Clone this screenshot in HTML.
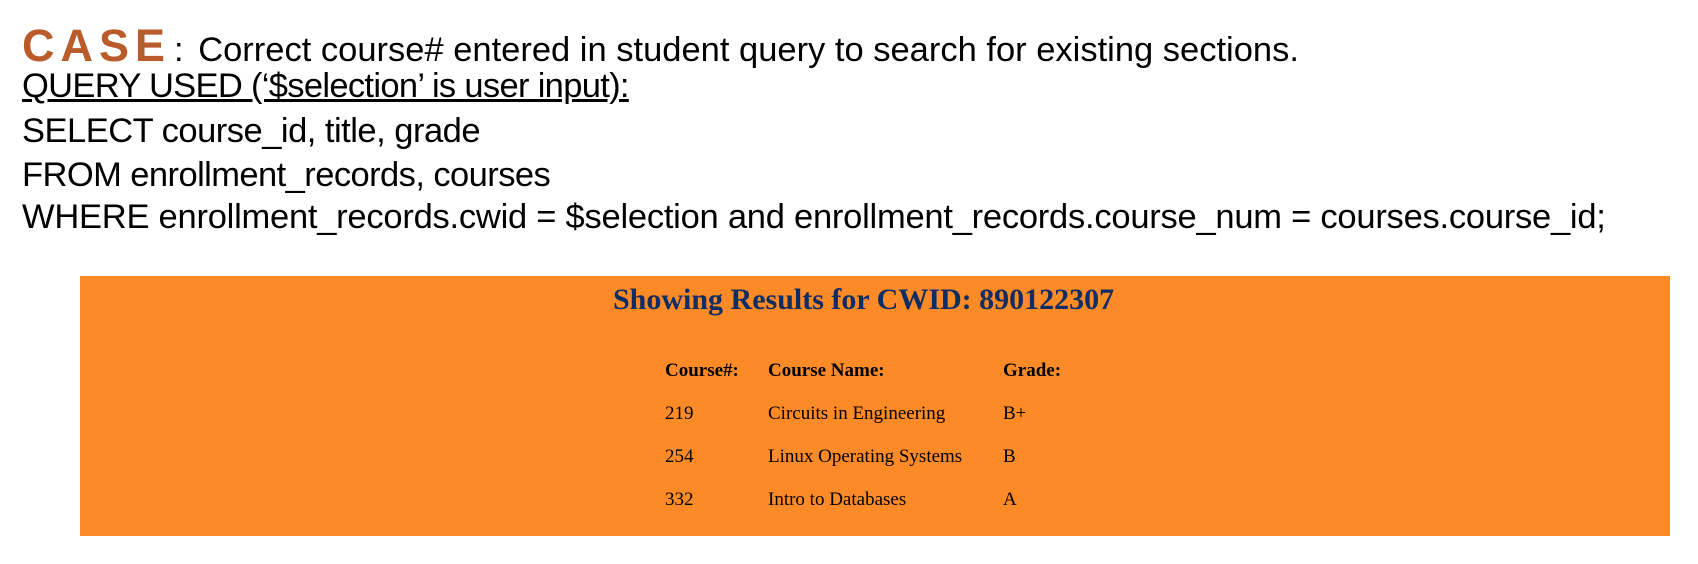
<!DOCTYPE html>
<html><head><meta charset="utf-8"><style>
body{margin:0;width:1698px;height:564px;background:#fff;position:relative;overflow:hidden;font-family:"Liberation Sans",sans-serif;}
.l{position:absolute;left:22px;font-size:34.5px;color:#000;white-space:nowrap;line-height:1;}
.case{color:#b95b2b;font-weight:bold;font-size:45px;letter-spacing:6px;margin-right:3px;}
#box{position:absolute;left:80px;top:276px;width:1590px;height:260px;background:#fc8a27;}
.s{position:absolute;font-family:"Liberation Serif",serif;white-space:nowrap;line-height:1;}
h1{position:absolute;margin:0;left:613px;top:285px;font-family:"Liberation Serif",serif;font-size:30px;color:#0f2d63;font-weight:bold;white-space:nowrap;line-height:1;}
.c{font-size:19px;color:#000;}
.b{font-weight:bold;}
</style></head><body>
<div class="l" style="top:23px"><span class="case">CASE</span>: <span style="margin-left:5px">Correct course# entered in student query to search for existing sections.</span></div>
<div class="l" style="top:69px;text-decoration:underline;letter-spacing:-0.68px">QUERY USED (‘$selection’ is user input):</div>
<div class="l" style="top:114px;letter-spacing:-0.5px">SELECT course_id, title, grade</div>
<div class="l" style="top:158px;letter-spacing:-0.57px">FROM enrollment_records, courses</div>
<div class="l" style="top:200px;letter-spacing:-0.24px">WHERE enrollment_records.cwid = $selection and enrollment_records.course_num = courses.course_id;</div>
<div id="box"></div>
<h1>Showing Results for CWID: 890122307</h1>
<div class="s c b" style="left:665px;top:361px">Course#:</div>
<div class="s c b" style="left:768px;top:361px">Course Name:</div>
<div class="s c b" style="left:1003px;top:361px">Grade:</div>
<div class="s c" style="left:665px;top:404px">219</div>
<div class="s c" style="left:768px;top:404px">Circuits in Engineering</div>
<div class="s c" style="left:1003px;top:404px">B+</div>
<div class="s c" style="left:665px;top:447px">254</div>
<div class="s c" style="left:768px;top:447px">Linux Operating Systems</div>
<div class="s c" style="left:1003px;top:447px">B</div>
<div class="s c" style="left:665px;top:490px">332</div>
<div class="s c" style="left:768px;top:490px">Intro to Databases</div>
<div class="s c" style="left:1003px;top:490px">A</div>
</body></html>
